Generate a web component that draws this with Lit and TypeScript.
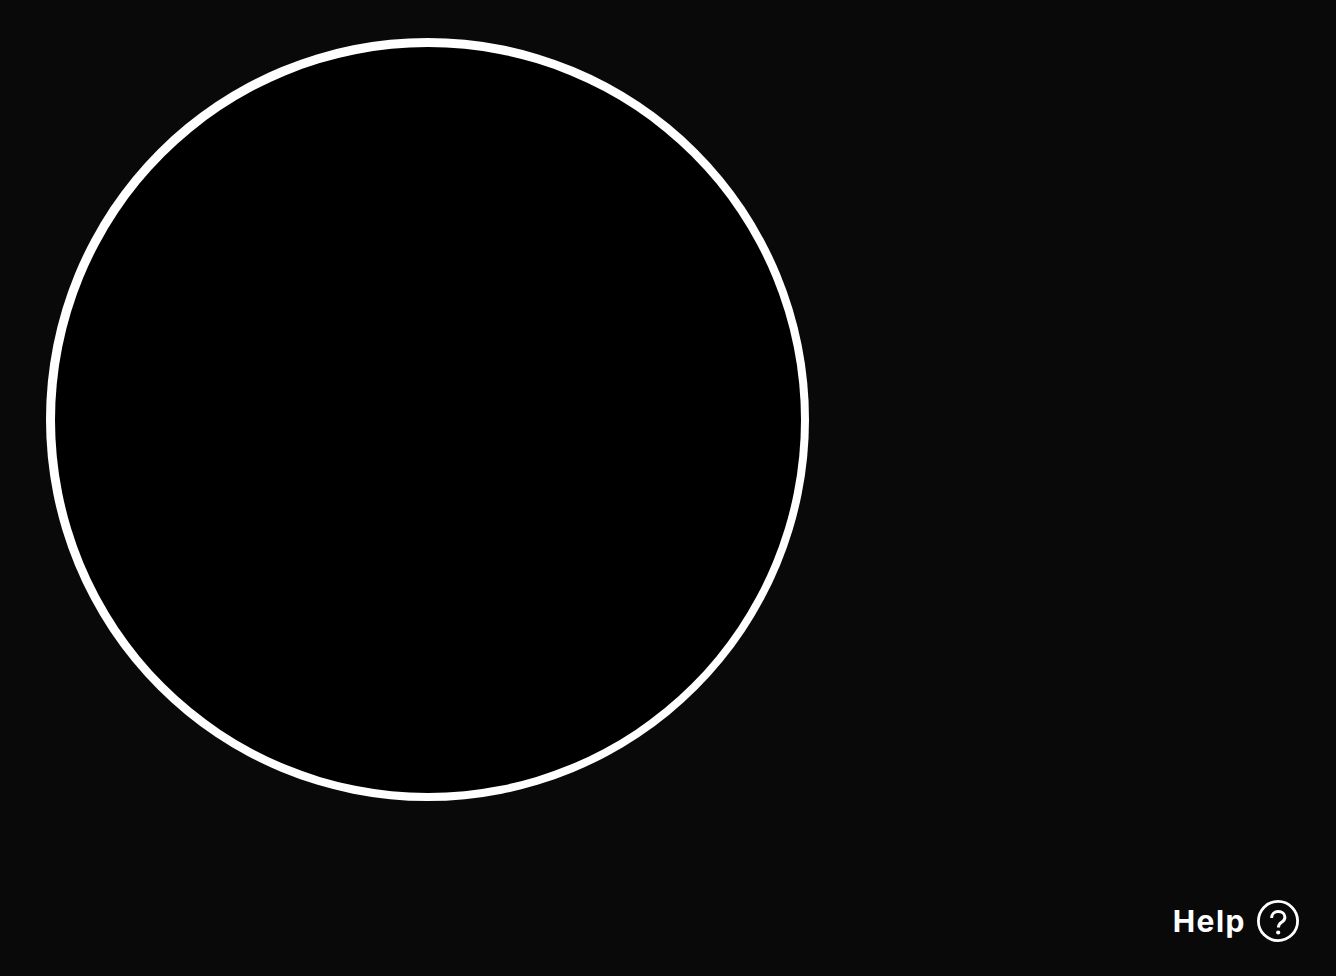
import { LitElement, html, css } from "lit";
import { customElement } from "lit/decorators.js";

@customElement("app-root")
export class AppRoot extends LitElement {
  static styles = css`
    :host {
      display: block;
      position: relative;
      height: 976px;
      box-sizing: border-box;
      padding: 38px 0 0 46px;
      background: #090909;
      overflow: hidden;
    }
    .ring {
      width: 763px;
      height: 763px;
      box-sizing: border-box;
      padding: 8.5px;
      border-radius: 50%;
      background: #fff;
    }
    .disc {
      width: 100%;
      height: 100%;
      border-radius: 50%;
      background: #000;
    }
    .help {
      position: absolute;
      right: 37px;
      bottom: 34px;
      display: flex;
      align-items: center;
      gap: 11px;
      color: #fff;
      font: 700 30px/42px Inter, "Liberation Sans", sans-serif;
      letter-spacing: 1.5px;
    }
    svg {
      display: block;
      width: 42px;
      height: 42px;
    }
  `;

  render() {
    return html`
      <div class="ring"><div class="disc"></div></div>
      <div class="help">
        <span>Help</span>
        <svg viewBox="0 0 42 42" fill="none" stroke="#fff" stroke-width="2.8">
          <circle cx="21" cy="21" r="19.600"></circle>
          <path d="M14.6 18c0-3.900 2.900-6.600 6.700-6.600 3.700 0 6.600 2.500 6.600 5.900 0 2.500-1.300 3.700-3.300 5-2 1.300-3.200 2.400-3.200 5.300" stroke-width="3"></path>
          <circle cx="21.200" cy="32.500" r="2.100" fill="#fff" stroke="none"></circle>
        </svg>
      </div>
    `;
  }
}
